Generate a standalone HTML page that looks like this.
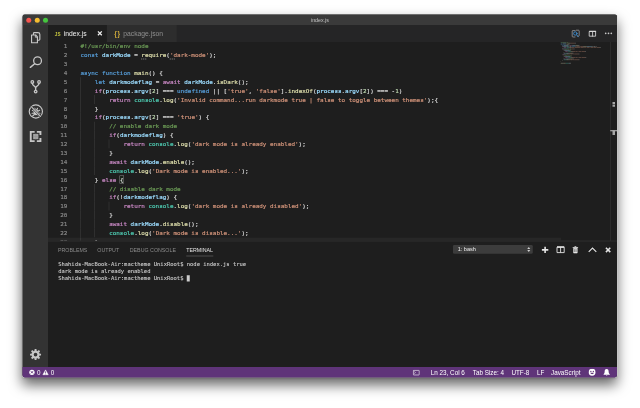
<!DOCTYPE html>
<html lang="en"><head><meta charset="utf-8"><title>index.js</title>
<style>
html,body{margin:0;padding:0;background:#fff;width:640px;height:408px;overflow:hidden}
*{box-sizing:border-box}
#z{filter:blur(1.1px);position:absolute;left:0;top:0;width:2560px;height:1632px;transform:scale(0.25);transform-origin:0 0}
#zz{zoom:4;position:absolute;left:0;top:0;width:640px;height:408px}
#win{position:absolute;left:22.5px;top:14.5px;width:594.5px;height:362.75px;background:#1e1e1e;border-radius:2.2px;
 box-shadow:0 0 0 0.5px rgba(225,225,225,.75),0 7px 12.5px rgba(0,0,0,.6),0 1px 2px rgba(0,0,0,.12);overflow:visible;
 font-family:"Liberation Sans",sans-serif;color:#ccc}
#clip{position:absolute;left:0;top:0;width:100%;height:100%;border-radius:2.2px;overflow:hidden}
#o{position:absolute;left:0.25px;top:0.15px;width:594.4px;height:362.6px}
#title{position:absolute;left:-0.25px;top:-0.15px;width:595px;height:10.55px;background:#3a3a3a;border-top:0.25px solid #686868}
#title .t{position:absolute;left:-0.05px;width:100%;top:2.45px;text-align:center;font-size:5.3px;line-height:6px;color:#c4c4c4}
.tl{position:absolute;top:3px;width:5px;height:5px;border-radius:50%}
#ab{position:absolute;left:-0.1px;top:10.3px;width:25.3px;height:342.2px;background:#333}
#ab svg{position:absolute}
#tabs{position:absolute;left:25.2px;top:10.3px;right:-0.4px;height:17px;background:#252526}
.tab{position:absolute;top:0;height:17px;font-size:6.75px;line-height:17.9px;white-space:pre}
.tab span,.tab svg{position:absolute}
.tab span{top:0}
#ed{position:absolute;left:25.2px;top:27.3px;right:-0.4px;height:199px;background:#1e1e1e;overflow:hidden}
#code{position:absolute;left:-25.2px;top:-27.3px;width:594.4px;height:362.6px;font-family:"DejaVu Sans Mono","Liberation Mono",monospace;font-size:5.94px;line-height:8.893px;white-space:pre;-webkit-text-stroke:0.2px}
.ln{margin-top:0.25px;position:absolute;left:19.9px;width:24.7px;text-align:right;color:#858585;height:8.893px}
.cl{margin-top:0.25px;position:absolute;left:57.8px;height:8.893px}
.g{position:absolute;width:0.5px;height:8.893px;background:#404040}
.k{color:#569cd6}.v{color:#9cdcfe}.f{color:#dcdcaa}.s{color:#ce9178}.c{color:#6a9955}.p{color:#c586c0}.n{color:#b5cea8}.t{color:#4ec9b0}.d{color:#d4d4d4}
.bm{outline:0.5px solid #888;outline-offset:-0.2px;background:rgba(0,100,0,.1)}
.mm{position:absolute}
#panel{position:absolute;left:25.2px;top:226.2px;right:-0.4px;height:126.4px;background:#1e1e1e;border-top:0.6px solid #414141}
#panel .h{position:absolute;top:5.7px;font-size:5.3px;line-height:6px;color:#8b8b8b;white-space:pre}
#term{position:absolute;left:10.2px;top:19.6px;font-family:"DejaVu Sans Mono","Liberation Mono",monospace;font-size:5.48px;line-height:7.05px;color:#ccc;white-space:pre;-webkit-text-stroke:0.1px}
#status{position:absolute;left:0;top:352.4px;width:100%;height:10.4px;box-shadow:-1px 0 0 #5f3479,1px 0 0 #5f3479,0 1px 0 #5f3479;background:#5f3479;font-size:6.3px;line-height:10.9px;color:#fff;white-space:pre}
#status span,#status svg{position:absolute}
#status span{top:0}
</style></head><body>
<div id="z"><div id="zz">
<div id="win"><div id="clip"><div id="o">
 <div id="title">
  <i class="tl" style="left:3.8px;background:#f7554f"></i><i class="tl" style="left:12.25px;background:#f5bd30"></i><i class="tl" style="left:20.4px;background:#45c53f"></i>
  <div class="t">index.js</div>
 </div>
 <div id="ab">
  <svg width="25.2" height="341.5" viewBox="0 0 25.2 341.5" style="left:0.1px;top:0" fill="none" stroke="#c6c6c6" stroke-width="1.15" stroke-linejoin="round" stroke-linecap="round">
<!-- files -->
<path d="M8.8 10H12.9L14.7 11.9V17.7H8.8Z"/><path d="M12.6 10.2V12.2H14.6" stroke-width="0.9"/>
<path d="M10.7 9.4V8.5Q10.7 7.6 11.6 7.6H15.2Q17.1 7.6 17.1 9.5V14.3Q17.1 15.2 16.2 15.2H15.4"/>
<!-- search -->
<circle cx="14.8" cy="35.7" r="3.9" stroke-width="1.3"/><path d="M11.9 38.7L7.6 42.3" stroke-width="1.5"/>
<!-- git -->
<circle cx="9.6" cy="57" r="1.3" stroke-width="1.3"/><circle cx="16.3" cy="57" r="1.3" stroke-width="1.3"/><circle cx="12.9" cy="66.6" r="1.3" stroke-width="1.3"/>
<path d="M9.6 58.2C9.6 61 12.9 61 12.9 63.2V65.4M16.3 58.2C16.3 61 12.9 61 12.9 63.2" stroke-width="1.4"/>
<!-- debug -->
<circle cx="13.1" cy="86.5" r="6.6" stroke-width="1.15"/>
<ellipse cx="13.2" cy="87.2" rx="2.3" ry="3" fill="#c6c6c6" stroke="none"/>
<path d="M9.6 85.3L11.5 86.3M9.3 88.2H11.3M9.9 91L11.6 89.5M16.9 85.3L15 86.3M17.2 88.2H15.2M16.6 91L14.9 89.5M12 83.2L12.6 84.6M14.8 83.2L14.1 84.6" stroke-width="1.1"/>
<path d="M8.6 81.8L17.7 91.2" stroke="#333" stroke-width="2"/><path d="M8.5 81.7L17.8 91.3" stroke-width="1.1"/>
<!-- extensions -->
<path d="M11.9 106.9H8V116.1H11.9M14.1 106.9H17.7V110M17.7 113V116.1H14.1" stroke-width="1.9" stroke-linejoin="miter" stroke-linecap="butt"/>
<rect x="10.4" y="108.9" width="5.2" height="5.3" fill="#a4a4a4" stroke="none"/><path d="M13 108.9V114.2M10.4 111.5H15.6" stroke="#8a8a8a" stroke-width="0.4"/>
<!-- gear -->
<g transform="translate(12.8 329.6)"><circle r="3" stroke-width="2.3"/><g stroke-width="1.9" stroke-linecap="butt"><path d="M0 -5.5V-3.6M0 5.5V3.6M-5.5 0H-3.6M5.5 0H3.6M-3.9 -3.9L-2.6 -2.6M3.9 3.9L2.6 2.6M-3.9 3.9L-2.6 2.6M3.9 -3.9L2.6 -2.6"/></g></g>
</svg>
 </div>
 <div id="tabs">
  <div class="tab" style="left:0;width:58.7px;background:#1e1e1e;color:#f0f0f0">
   <span style="left:6.9px;top:0;color:#c5c53e;font-size:4.6px;font-weight:bold">JS</span><span style="left:15.9px">index.js</span>
   <svg style="left:49.4px;top:5.9px" width="5.2" height="5.2" viewBox="0 0 10 10"><path d="M1.2 1.2L8.8 8.8M8.8 1.2L1.2 8.8" stroke="#ececec" stroke-width="2.6"/></svg>
  </div>
  <div class="tab" style="left:59px;width:69.8px;background:#2d2d2d;color:#8f8f8f">
   <span style="left:7.3px;top:-0.5px;color:#d6b03c;font-size:6.6px;font-weight:bold;letter-spacing:0.7px">{}</span><span style="left:16.4px">package.json</span>
  </div>
  <svg style="position:absolute;left:522.0px;top:0" width="50" height="16.7" viewBox="0 0 50 16.7" fill="none" stroke-linecap="round" stroke-linejoin="round">
<path d="M2.6 5.6H5.2M6.4 5.2H8.4Q9.2 5.2 9.2 6V10.4Q9.2 11.2 8.4 11.2H7.6M2.2 6.4V11.2Q2.2 12 3 12H5" stroke="#9a9a9a" stroke-width="0.8"/>
<circle cx="5.3" cy="8.5" r="1.7" stroke="#3f8fd0" stroke-width="0.9"/><path d="M6.6 9.9L8.3 11.8" stroke="#3f8fd0" stroke-width="0.9"/>
<rect x="19.6" y="6.5" width="6" height="4.7" stroke="#d8d8d8" stroke-width="0.85"/><path d="M19.6 6.3H25.6" stroke="#d8d8d8" stroke-width="1.2"/><path d="M22.6 6.5V11.2" stroke="#d8d8d8" stroke-width="0.85"/>
<g fill="#c8c8c8"><circle cx="35.7" cy="8.3" r="0.85"/><circle cx="38.5" cy="8.3" r="0.85"/><circle cx="41.3" cy="8.3" r="0.85"/></g>
</svg>
 </div>
 <div id="ed">
  <div id="code">
<div class="ln" style="top:27.00px">1</div><div class="cl" style="top:27.00px"><span class="c">#!/usr/bin/env node</span></div>
<div class="ln" style="top:35.89px">2</div><div class="cl" style="top:35.89px"><span class="k">const</span><span class="d"> </span><span class="v">darkMode</span><span class="d"> = </span><span class="f">require</span><span class="d">(</span><span class="s">&#x27;dark-mode&#x27;</span><span class="d">);</span></div>
<div class="ln" style="top:44.79px">3</div><div class="cl" style="top:44.79px"></div>
<div class="ln" style="top:53.68px">4</div><div class="cl" style="top:53.68px"><span class="k">async</span><span class="d"> </span><span class="k">function</span><span class="d"> </span><span class="f">main</span><span class="d">() {</span></div>
<div class="ln" style="top:62.57px">5</div><i class="g" style="left:57.45px;top:62.57px"></i><div class="cl" style="top:62.57px"><span class="d">    </span><span class="k">let</span><span class="d"> </span><span class="v">darkmodeflag</span><span class="d"> = </span><span class="p">await</span><span class="d"> </span><span class="v">darkMode</span><span class="d">.</span><span class="f">isDark</span><span class="d">();</span></div>
<div class="ln" style="top:71.47px">6</div><i class="g" style="left:57.45px;top:71.47px"></i><div class="cl" style="top:71.47px"><span class="d">    </span><span class="p">if</span><span class="d">(</span><span class="v">process</span><span class="d">.</span><span class="v">argv</span><span class="d">[</span><span class="n">2</span><span class="d">] === </span><span class="k">undefined</span><span class="d"> || [</span><span class="s">&#x27;true&#x27;</span><span class="d">, </span><span class="s">&#x27;false&#x27;</span><span class="d">].</span><span class="f">indexOf</span><span class="d">(</span><span class="v">process</span><span class="d">.</span><span class="v">argv</span><span class="d">[</span><span class="n">2</span><span class="d">]) === -</span><span class="n">1</span><span class="d">)</span></div>
<div class="ln" style="top:80.36px">7</div><i class="g" style="left:57.45px;top:80.36px"></i><i class="g" style="left:71.70px;top:80.36px"></i><div class="cl" style="top:80.36px"><span class="d">        </span><span class="p">return</span><span class="d"> </span><span class="t">console</span><span class="d">.</span><span class="f">log</span><span class="d">(</span><span class="s">&#x27;Invalid command...run darkmode true | false to toggle between themes&#x27;</span><span class="d">);{</span></div>
<div class="ln" style="top:89.25px">8</div><i class="g" style="left:57.45px;top:89.25px"></i><div class="cl" style="top:89.25px"><span class="d">    }</span></div>
<div class="ln" style="top:98.14px">9</div><i class="g" style="left:57.45px;top:98.14px"></i><div class="cl" style="top:98.14px"><span class="d">    </span><span class="p">if</span><span class="d">(</span><span class="v">process</span><span class="d">.</span><span class="v">argv</span><span class="d">[</span><span class="n">2</span><span class="d">] === </span><span class="s">&#x27;true&#x27;</span><span class="d">) {</span></div>
<div class="ln" style="top:107.04px">10</div><i class="g" style="left:57.45px;top:107.04px"></i><i class="g" style="left:71.70px;top:107.04px"></i><div class="cl" style="top:107.04px"><span class="d">        </span><span class="c">// enable dark mode</span></div>
<div class="ln" style="top:115.93px">11</div><i class="g" style="left:57.45px;top:115.93px"></i><i class="g" style="left:71.70px;top:115.93px"></i><div class="cl" style="top:115.93px"><span class="d">        </span><span class="p">if</span><span class="d">(</span><span class="v">darkmodeflag</span><span class="d">) {</span></div>
<div class="ln" style="top:124.82px">12</div><i class="g" style="left:57.45px;top:124.82px"></i><i class="g" style="left:71.70px;top:124.82px"></i><i class="g" style="left:85.95px;top:124.82px"></i><div class="cl" style="top:124.82px"><span class="d">            </span><span class="p">return</span><span class="d"> </span><span class="t">console</span><span class="d">.</span><span class="f">log</span><span class="d">(</span><span class="s">&#x27;dark mode is already enabled&#x27;</span><span class="d">);</span></div>
<div class="ln" style="top:133.72px">13</div><i class="g" style="left:57.45px;top:133.72px"></i><i class="g" style="left:71.70px;top:133.72px"></i><div class="cl" style="top:133.72px"><span class="d">        }</span></div>
<div class="ln" style="top:142.61px">14</div><i class="g" style="left:57.45px;top:142.61px"></i><i class="g" style="left:71.70px;top:142.61px"></i><div class="cl" style="top:142.61px"><span class="d">        </span><span class="p">await</span><span class="d"> </span><span class="v">darkMode</span><span class="d">.</span><span class="f">enable</span><span class="d">();</span></div>
<div class="ln" style="top:151.50px">15</div><i class="g" style="left:57.45px;top:151.50px"></i><i class="g" style="left:71.70px;top:151.50px"></i><div class="cl" style="top:151.50px"><span class="d">        </span><span class="t">console</span><span class="d">.</span><span class="f">log</span><span class="d">(</span><span class="s">&#x27;Dark mode is enabled...&#x27;</span><span class="d">);</span></div>
<div class="ln" style="top:160.40px">16</div><i class="g" style="left:57.45px;top:160.40px"></i><div class="cl" style="top:160.40px"><span class="d">    } </span><span class="p">else</span><span class="d"> </span><span class="d bm">{</span></div>
<div class="ln" style="top:169.29px">17</div><i class="g" style="left:57.45px;top:169.29px"></i><i class="g" style="left:71.70px;top:169.29px"></i><div class="cl" style="top:169.29px"><span class="d">        </span><span class="c">// disable dark mode</span></div>
<div class="ln" style="top:178.18px">18</div><i class="g" style="left:57.45px;top:178.18px"></i><i class="g" style="left:71.70px;top:178.18px"></i><div class="cl" style="top:178.18px"><span class="d">        </span><span class="p">if</span><span class="d">(!</span><span class="v">darkmodeflag</span><span class="d">) {</span></div>
<div class="ln" style="top:187.07px">19</div><i class="g" style="left:57.45px;top:187.07px"></i><i class="g" style="left:71.70px;top:187.07px"></i><i class="g" style="left:85.95px;top:187.07px"></i><div class="cl" style="top:187.07px"><span class="d">            </span><span class="p">return</span><span class="d"> </span><span class="t">console</span><span class="d">.</span><span class="f">log</span><span class="d">(</span><span class="s">&#x27;dark mode is already disabled&#x27;</span><span class="d">);</span></div>
<div class="ln" style="top:195.97px">20</div><i class="g" style="left:57.45px;top:195.97px"></i><i class="g" style="left:71.70px;top:195.97px"></i><div class="cl" style="top:195.97px"><span class="d">        }</span></div>
<div class="ln" style="top:204.86px">21</div><i class="g" style="left:57.45px;top:204.86px"></i><i class="g" style="left:71.70px;top:204.86px"></i><div class="cl" style="top:204.86px"><span class="d">        </span><span class="p">await</span><span class="d"> </span><span class="v">darkMode</span><span class="d">.</span><span class="f">disable</span><span class="d">();</span></div>
<div class="ln" style="top:213.75px">22</div><i class="g" style="left:57.45px;top:213.75px"></i><i class="g" style="left:71.70px;top:213.75px"></i><div class="cl" style="top:213.75px"><span class="d">        </span><span class="t">console</span><span class="d">.</span><span class="f">log</span><span class="d">(</span><span class="s">&#x27;Dark mode is disable...&#x27;</span><span class="d">);</span></div>
<div class="ln" style="top:222.65px">23</div><i class="g" style="left:57.45px;top:222.65px"></i><div class="cl" style="top:222.65px"><span class="d">    }</span></div>
<i style="position:absolute;left:118.6px;top:43.9px;width:1px;height:0.9px;background:#8e8e8e"></i><i style="position:absolute;left:120.5px;top:43.9px;width:1px;height:0.9px;background:#8e8e8e"></i><i style="position:absolute;left:122.4px;top:43.9px;width:1px;height:0.9px;background:#8e8e8e"></i><i style="position:absolute;left:147.1px;top:43.9px;width:1px;height:0.9px;background:#8e8e8e"></i><i style="position:absolute;left:149.0px;top:43.9px;width:1px;height:0.9px;background:#8e8e8e"></i><i style="position:absolute;left:150.9px;top:43.9px;width:1px;height:0.9px;background:#8e8e8e"></i>
  <svg class="mm" style="left:537.70px;top:27.40px" width="46" height="24" viewBox="0 0 46 24" opacity="0.55"><rect x="0.00" y="0.00" width="5.63" height="0.58" fill="#6a9955"/><rect x="6.03" y="0.00" width="1.61" height="0.58" fill="#6a9955"/><rect x="0.00" y="0.83" width="2.01" height="0.58" fill="#569cd6"/><rect x="2.41" y="0.83" width="3.22" height="0.58" fill="#9cdcfe"/><rect x="6.03" y="0.83" width="0.40" height="0.58" fill="#d4d4d4"/><rect x="6.83" y="0.83" width="2.81" height="0.58" fill="#dcdcaa"/><rect x="9.65" y="0.83" width="0.40" height="0.58" fill="#d4d4d4"/><rect x="10.05" y="0.83" width="4.42" height="0.58" fill="#ce9178"/><rect x="14.47" y="0.83" width="0.80" height="0.58" fill="#d4d4d4"/><rect x="0.00" y="2.50" width="2.01" height="0.58" fill="#569cd6"/><rect x="2.41" y="2.50" width="3.22" height="0.58" fill="#569cd6"/><rect x="6.03" y="2.50" width="1.61" height="0.58" fill="#dcdcaa"/><rect x="7.64" y="2.50" width="0.80" height="0.58" fill="#d4d4d4"/><rect x="8.84" y="2.50" width="0.40" height="0.58" fill="#d4d4d4"/><rect x="1.61" y="3.34" width="1.21" height="0.58" fill="#569cd6"/><rect x="3.22" y="3.34" width="4.82" height="0.58" fill="#9cdcfe"/><rect x="8.44" y="3.34" width="0.40" height="0.58" fill="#d4d4d4"/><rect x="9.25" y="3.34" width="2.01" height="0.58" fill="#c586c0"/><rect x="11.66" y="3.34" width="3.22" height="0.58" fill="#9cdcfe"/><rect x="14.87" y="3.34" width="0.40" height="0.58" fill="#d4d4d4"/><rect x="15.28" y="3.34" width="2.41" height="0.58" fill="#dcdcaa"/><rect x="17.69" y="3.34" width="1.21" height="0.58" fill="#d4d4d4"/><rect x="1.61" y="4.17" width="0.80" height="0.58" fill="#c586c0"/><rect x="2.41" y="4.17" width="0.40" height="0.58" fill="#d4d4d4"/><rect x="2.81" y="4.17" width="2.81" height="0.58" fill="#9cdcfe"/><rect x="5.63" y="4.17" width="0.40" height="0.58" fill="#d4d4d4"/><rect x="6.03" y="4.17" width="1.61" height="0.58" fill="#9cdcfe"/><rect x="7.64" y="4.17" width="0.40" height="0.58" fill="#d4d4d4"/><rect x="8.04" y="4.17" width="0.40" height="0.58" fill="#b5cea8"/><rect x="8.44" y="4.17" width="0.40" height="0.58" fill="#d4d4d4"/><rect x="9.25" y="4.17" width="1.21" height="0.58" fill="#d4d4d4"/><rect x="10.85" y="4.17" width="3.62" height="0.58" fill="#569cd6"/><rect x="14.87" y="4.17" width="0.80" height="0.58" fill="#d4d4d4"/><rect x="16.08" y="4.17" width="0.40" height="0.58" fill="#d4d4d4"/><rect x="16.48" y="4.17" width="2.41" height="0.58" fill="#ce9178"/><rect x="18.89" y="4.17" width="0.40" height="0.58" fill="#d4d4d4"/><rect x="19.70" y="4.17" width="2.81" height="0.58" fill="#ce9178"/><rect x="22.51" y="4.17" width="0.80" height="0.58" fill="#d4d4d4"/><rect x="23.32" y="4.17" width="2.81" height="0.58" fill="#dcdcaa"/><rect x="26.13" y="4.17" width="0.40" height="0.58" fill="#d4d4d4"/><rect x="26.53" y="4.17" width="2.81" height="0.58" fill="#9cdcfe"/><rect x="29.35" y="4.17" width="0.40" height="0.58" fill="#d4d4d4"/><rect x="29.75" y="4.17" width="1.61" height="0.58" fill="#9cdcfe"/><rect x="31.36" y="4.17" width="0.40" height="0.58" fill="#d4d4d4"/><rect x="31.76" y="4.17" width="0.40" height="0.58" fill="#b5cea8"/><rect x="32.16" y="4.17" width="0.80" height="0.58" fill="#d4d4d4"/><rect x="33.37" y="4.17" width="1.21" height="0.58" fill="#d4d4d4"/><rect x="34.97" y="4.17" width="0.40" height="0.58" fill="#d4d4d4"/><rect x="35.38" y="4.17" width="0.40" height="0.58" fill="#b5cea8"/><rect x="35.78" y="4.17" width="0.40" height="0.58" fill="#d4d4d4"/><rect x="3.22" y="5.01" width="2.41" height="0.58" fill="#c586c0"/><rect x="6.03" y="5.01" width="2.81" height="0.58" fill="#4ec9b0"/><rect x="8.84" y="5.01" width="0.40" height="0.58" fill="#d4d4d4"/><rect x="9.25" y="5.01" width="1.21" height="0.58" fill="#dcdcaa"/><rect x="10.45" y="5.01" width="0.40" height="0.58" fill="#d4d4d4"/><rect x="10.85" y="5.01" width="3.22" height="0.58" fill="#ce9178"/><rect x="14.47" y="5.01" width="5.23" height="0.58" fill="#ce9178"/><rect x="20.10" y="5.01" width="3.22" height="0.58" fill="#ce9178"/><rect x="23.72" y="5.01" width="1.61" height="0.58" fill="#ce9178"/><rect x="25.73" y="5.01" width="0.40" height="0.58" fill="#ce9178"/><rect x="26.53" y="5.01" width="2.01" height="0.58" fill="#ce9178"/><rect x="28.94" y="5.01" width="0.80" height="0.58" fill="#ce9178"/><rect x="30.15" y="5.01" width="2.41" height="0.58" fill="#ce9178"/><rect x="32.96" y="5.01" width="2.81" height="0.58" fill="#ce9178"/><rect x="36.18" y="5.01" width="2.81" height="0.58" fill="#ce9178"/><rect x="38.99" y="5.01" width="1.21" height="0.58" fill="#d4d4d4"/><rect x="1.61" y="5.84" width="0.40" height="0.58" fill="#d4d4d4"/><rect x="1.61" y="6.68" width="0.80" height="0.58" fill="#c586c0"/><rect x="2.41" y="6.68" width="0.40" height="0.58" fill="#d4d4d4"/><rect x="2.81" y="6.68" width="2.81" height="0.58" fill="#9cdcfe"/><rect x="5.63" y="6.68" width="0.40" height="0.58" fill="#d4d4d4"/><rect x="6.03" y="6.68" width="1.61" height="0.58" fill="#9cdcfe"/><rect x="7.64" y="6.68" width="0.40" height="0.58" fill="#d4d4d4"/><rect x="8.04" y="6.68" width="0.40" height="0.58" fill="#b5cea8"/><rect x="8.44" y="6.68" width="0.40" height="0.58" fill="#d4d4d4"/><rect x="9.25" y="6.68" width="1.21" height="0.58" fill="#d4d4d4"/><rect x="10.85" y="6.68" width="2.41" height="0.58" fill="#ce9178"/><rect x="13.27" y="6.68" width="0.40" height="0.58" fill="#d4d4d4"/><rect x="14.07" y="6.68" width="0.40" height="0.58" fill="#d4d4d4"/><rect x="3.22" y="7.51" width="0.80" height="0.58" fill="#6a9955"/><rect x="4.42" y="7.51" width="2.41" height="0.58" fill="#6a9955"/><rect x="7.24" y="7.51" width="1.61" height="0.58" fill="#6a9955"/><rect x="9.25" y="7.51" width="1.61" height="0.58" fill="#6a9955"/><rect x="3.22" y="8.35" width="0.80" height="0.58" fill="#c586c0"/><rect x="4.02" y="8.35" width="0.40" height="0.58" fill="#d4d4d4"/><rect x="4.42" y="8.35" width="4.82" height="0.58" fill="#9cdcfe"/><rect x="9.25" y="8.35" width="0.40" height="0.58" fill="#d4d4d4"/><rect x="10.05" y="8.35" width="0.40" height="0.58" fill="#d4d4d4"/><rect x="4.82" y="9.18" width="2.41" height="0.58" fill="#c586c0"/><rect x="7.64" y="9.18" width="2.81" height="0.58" fill="#4ec9b0"/><rect x="10.45" y="9.18" width="0.40" height="0.58" fill="#d4d4d4"/><rect x="10.85" y="9.18" width="1.21" height="0.58" fill="#dcdcaa"/><rect x="12.06" y="9.18" width="0.40" height="0.58" fill="#d4d4d4"/><rect x="12.46" y="9.18" width="2.01" height="0.58" fill="#ce9178"/><rect x="14.87" y="9.18" width="1.61" height="0.58" fill="#ce9178"/><rect x="16.88" y="9.18" width="0.80" height="0.58" fill="#ce9178"/><rect x="18.09" y="9.18" width="2.81" height="0.58" fill="#ce9178"/><rect x="21.31" y="9.18" width="3.22" height="0.58" fill="#ce9178"/><rect x="24.52" y="9.18" width="0.80" height="0.58" fill="#d4d4d4"/><rect x="3.22" y="10.02" width="0.40" height="0.58" fill="#d4d4d4"/><rect x="3.22" y="10.86" width="2.01" height="0.58" fill="#c586c0"/><rect x="5.63" y="10.86" width="3.22" height="0.58" fill="#9cdcfe"/><rect x="8.84" y="10.86" width="0.40" height="0.58" fill="#d4d4d4"/><rect x="9.25" y="10.86" width="2.41" height="0.58" fill="#dcdcaa"/><rect x="11.66" y="10.86" width="1.21" height="0.58" fill="#d4d4d4"/><rect x="3.22" y="11.69" width="2.81" height="0.58" fill="#4ec9b0"/><rect x="6.03" y="11.69" width="0.40" height="0.58" fill="#d4d4d4"/><rect x="6.43" y="11.69" width="1.21" height="0.58" fill="#dcdcaa"/><rect x="7.64" y="11.69" width="0.40" height="0.58" fill="#d4d4d4"/><rect x="8.04" y="11.69" width="2.01" height="0.58" fill="#ce9178"/><rect x="10.45" y="11.69" width="1.61" height="0.58" fill="#ce9178"/><rect x="12.46" y="11.69" width="0.80" height="0.58" fill="#ce9178"/><rect x="13.67" y="11.69" width="4.42" height="0.58" fill="#ce9178"/><rect x="18.09" y="11.69" width="0.80" height="0.58" fill="#d4d4d4"/><rect x="1.61" y="12.52" width="0.40" height="0.58" fill="#d4d4d4"/><rect x="2.41" y="12.52" width="1.61" height="0.58" fill="#c586c0"/><rect x="4.42" y="12.52" width="0.40" height="0.58" fill="#d4d4d4"/><rect x="3.22" y="13.36" width="0.80" height="0.58" fill="#6a9955"/><rect x="4.42" y="13.36" width="2.81" height="0.58" fill="#6a9955"/><rect x="7.64" y="13.36" width="1.61" height="0.58" fill="#6a9955"/><rect x="9.65" y="13.36" width="1.61" height="0.58" fill="#6a9955"/><rect x="3.22" y="14.20" width="0.80" height="0.58" fill="#c586c0"/><rect x="4.02" y="14.20" width="0.80" height="0.58" fill="#d4d4d4"/><rect x="4.82" y="14.20" width="4.82" height="0.58" fill="#9cdcfe"/><rect x="9.65" y="14.20" width="0.40" height="0.58" fill="#d4d4d4"/><rect x="10.45" y="14.20" width="0.40" height="0.58" fill="#d4d4d4"/><rect x="4.82" y="15.03" width="2.41" height="0.58" fill="#c586c0"/><rect x="7.64" y="15.03" width="2.81" height="0.58" fill="#4ec9b0"/><rect x="10.45" y="15.03" width="0.40" height="0.58" fill="#d4d4d4"/><rect x="10.85" y="15.03" width="1.21" height="0.58" fill="#dcdcaa"/><rect x="12.06" y="15.03" width="0.40" height="0.58" fill="#d4d4d4"/><rect x="12.46" y="15.03" width="2.01" height="0.58" fill="#ce9178"/><rect x="14.87" y="15.03" width="1.61" height="0.58" fill="#ce9178"/><rect x="16.88" y="15.03" width="0.80" height="0.58" fill="#ce9178"/><rect x="18.09" y="15.03" width="2.81" height="0.58" fill="#ce9178"/><rect x="21.31" y="15.03" width="3.62" height="0.58" fill="#ce9178"/><rect x="24.92" y="15.03" width="0.80" height="0.58" fill="#d4d4d4"/><rect x="3.22" y="15.86" width="0.40" height="0.58" fill="#d4d4d4"/><rect x="3.22" y="16.70" width="2.01" height="0.58" fill="#c586c0"/><rect x="5.63" y="16.70" width="3.22" height="0.58" fill="#9cdcfe"/><rect x="8.84" y="16.70" width="0.40" height="0.58" fill="#d4d4d4"/><rect x="9.25" y="16.70" width="2.81" height="0.58" fill="#dcdcaa"/><rect x="12.06" y="16.70" width="1.21" height="0.58" fill="#d4d4d4"/><rect x="3.22" y="17.54" width="2.81" height="0.58" fill="#4ec9b0"/><rect x="6.03" y="17.54" width="0.40" height="0.58" fill="#d4d4d4"/><rect x="6.43" y="17.54" width="1.21" height="0.58" fill="#dcdcaa"/><rect x="7.64" y="17.54" width="0.40" height="0.58" fill="#d4d4d4"/><rect x="8.04" y="17.54" width="2.01" height="0.58" fill="#ce9178"/><rect x="10.45" y="17.54" width="1.61" height="0.58" fill="#ce9178"/><rect x="12.46" y="17.54" width="0.80" height="0.58" fill="#ce9178"/><rect x="13.67" y="17.54" width="4.42" height="0.58" fill="#ce9178"/><rect x="18.09" y="17.54" width="0.80" height="0.58" fill="#d4d4d4"/><rect x="1.61" y="18.37" width="0.40" height="0.58" fill="#d4d4d4"/><rect x="0.00" y="19.20" width="0.40" height="0.58" fill="#d4d4d4"/><rect x="0.00" y="20.88" width="1.61" height="0.58" fill="#dcdcaa"/><rect x="1.61" y="20.88" width="1.21" height="0.58" fill="#d4d4d4"/><rect x="2.81" y="20.88" width="2.01" height="0.58" fill="#dcdcaa"/><rect x="4.82" y="20.88" width="0.40" height="0.58" fill="#d4d4d4"/><rect x="5.23" y="20.88" width="2.81" height="0.58" fill="#4ec9b0"/><rect x="8.04" y="20.88" width="0.40" height="0.58" fill="#d4d4d4"/><rect x="8.44" y="20.88" width="1.21" height="0.58" fill="#9cdcfe"/><rect x="9.65" y="20.88" width="0.80" height="0.58" fill="#d4d4d4"/></svg>
  </div>
  <i style="position:absolute;left:562.3px;top:0;width:0.5px;height:100%;background:#383838"></i>
<i style="position:absolute;left:564.5px;top:60.1px;width:2.5px;height:2.1px;background:#a6a6a6"></i><i style="position:absolute;left:564.5px;top:62.7px;width:2.5px;height:2.1px;background:#a6a6a6"></i>
<i style="position:absolute;left:562.4px;top:88.3px;width:7px;height:0.9px;background:#c4c4c4"></i>
<i style="position:absolute;left:564.5px;top:88.3px;width:2.5px;height:4.8px;background:#a6a6a6"></i>
<i style="position:absolute;left:0;top:195.7px;width:513px;height:2.5px;background:rgba(121,121,121,.11)"></i>
 </div>
 <div id="panel">
  <span class="h" style="left:10px">PROBLEMS</span>
  <span class="h" style="left:49.4px">OUTPUT</span>
  <span class="h" style="left:81.8px">DEBUG CONSOLE</span>
  <span class="h" style="left:138.2px;color:#e7e7e7">TERMINAL</span>
  <i style="position:absolute;left:138.2px;top:14.5px;width:27px;height:0.5px;background:#7c7c7c"></i>
  <i style="position:absolute;left:405.1px;top:3.6px;width:79.8px;height:8.8px;background:#3c3c3c;border-radius:1.3px"></i><span style="position:absolute;left:409.7px;top:3.6px;font-size:5.55px;line-height:8.9px;color:#f0f0f0;white-space:pre">1: bash</span>
<svg style="position:absolute;left:478.9px;top:4.6px" width="4" height="7" viewBox="0 0 4 7" fill="#d0d0d0"><path d="M0.5 2.9L2 0.9L3.5 2.9ZM0.5 4.1L2 6.1L3.5 4.1Z"/></svg>
<svg style="position:absolute;left:492.1px;top:2.6px" width="80" height="12" viewBox="0 0 80 12" fill="none" stroke="#e4e4e4" stroke-linejoin="round">
<path d="M5.1 2.7V9.1M1.9 5.9H8.3" stroke-width="1.6"/>
<rect x="17" y="3.2" width="7.2" height="5.4" stroke-width="0.9"/><path d="M17 3H24.2" stroke-width="1.3"/><path d="M20.6 3.2V8.6" stroke-width="0.9"/>
<path d="M33.6 4.3V9H37.2V4.3Z" fill="#e4e4e4" stroke-width="0.6"/><path d="M32.7 3.6H38.1" stroke-width="0.9"/><path d="M34.5 2.7H36.3" stroke-width="0.9"/><path d="M34.7 5.2V8M36.1 5.2V8" stroke="#1e1e1e" stroke-width="0.5"/>
<path d="M48.7 7.9L52.5 4.1L56.3 7.9" stroke-width="1.1" stroke-linejoin="miter"/>
<path d="M65.9 3.7L70.3 8.1M70.3 3.7L65.9 8.1" stroke-width="1.5"/>
</svg>
  <div id="term">Shahids-MacBook-Air:mactheme UnixRoot$ node index.js true
dark mode is already enabled
Shahids-MacBook-Air:mactheme UnixRoot$ <i style="display:inline-block;width:2.9px;height:6.2px;background:#ccc;vertical-align:-1.1px"></i></div>
 </div>
 <div id="status">
  <svg style="left:0;top:0" width="60" height="10.8" viewBox="0 0 60 10.8"><circle cx="9.2" cy="5.3" r="2.65" fill="#fff"/><path d="M8.1 4.2L10.3 6.4M10.3 4.2L8.1 6.4" stroke="#5f3479" stroke-width="0.95"/>
<path d="M22.8 2.9L25.5 7.7H20.1Z" fill="#fff" stroke="#fff" stroke-width="0.5" stroke-linejoin="round"/><path d="M22.8 4.3V6.1M22.8 6.6V7.3" stroke="#5f3479" stroke-width="0.75"/></svg>
<span style="left:14.2px">0</span><span style="left:28.1px">0</span>
<svg style="left:389.9px;top:2.6px" width="7" height="6" viewBox="0 0 7 6" fill="none" stroke="#fff"><rect x="0.5" y="0.5" width="6" height="4.8" rx="0.6" stroke-width="0.7"/><path d="M1.6 1.8L2.7 2.8L1.6 3.8" stroke-width="0.6"/></svg>
<span style="left:408.1px">Ln 23, Col 6</span><span style="left:450.0px">Tab Size: 4</span><span style="left:488.7px">UTF-8</span><span style="left:514.2px">LF</span><span style="left:528.3px">JavaScript</span>
<svg style="left:565.7px;top:1.7px" width="7.2" height="7.2" viewBox="0 0 6.4 6.4"><circle cx="3.2" cy="3.2" r="3.1" fill="#fff"/><circle cx="2.1" cy="2.4" r="0.6" fill="#5f3479"/><circle cx="4.3" cy="2.4" r="0.6" fill="#5f3479"/><path d="M1.3 3.6Q3.2 6.2 5.1 3.6Z" fill="#5f3479"/></svg>
<svg style="left:580.5px;top:1.6px" width="6.8" height="7.2" viewBox="0 0 6.4 6.8" fill="#fff"><path d="M3.2 0.3C4.7 0.3 5.1 1.6 5.1 2.8C5.1 4 5.5 4.6 6.2 5.1V5.6H0.2V5.1C0.9 4.6 1.3 4 1.3 2.8C1.3 1.6 1.7 0.3 3.2 0.3Z"/><path d="M2.4 6H4Q3.2 7.2 2.4 6Z"/></svg>
 </div>
</div></div></div>
</div></div>
</body></html>
